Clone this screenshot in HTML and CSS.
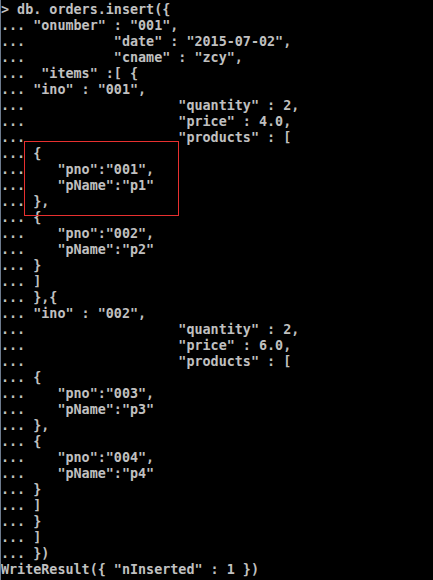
FILE: index.html
```html
<!DOCTYPE html>
<html>
<head>
<meta charset="utf-8">
<link rel="stylesheet" href="styles.css">
</head>
<body>
<div class="console">
<pre class="out">&gt; db. orders.insert({
... "onumber" : "001",
...           "date" : "2015-07-02",
...           "cname" : "zcy",
...  "items" :[ {
... "ino" : "001",
...                   "quantity" : 2,
...                   "price" : 4.0,
...                   "products" : [
... {
...    "pno":"001",
...    "pName":"p1"
... },
... {
...    "pno":"002",
...    "pName":"p2"
... }
... ]
... },{
... "ino" : "002",
...                   "quantity" : 2,
...                   "price" : 6.0,
...                   "products" : [
... {
...    "pno":"003",
...    "pName":"p3"
... },
... {
...    "pno":"004",
...    "pName":"p4"
... }
... ]
... }
... ]
... })
WriteResult({ "nInserted" : 1 })</pre>
<div class="highlight"></div>
</div>
</body>
</html>
```
FILE: styles.css
```css
html, body {
  margin: 0;
  padding: 0;
  background: #000;
}
.console {
  position: relative;
  width: 432px;
  height: 580px;
  border-left: 1px solid #6d7a8c;
  background: #000;
  overflow: hidden;
}
.out {
  margin: 0;
  padding: 2px 0 0 0;
  font-family: "DejaVu Sans Mono", monospace;
  font-weight: bold;
  font-size: 13.4px;
  line-height: 16px;
  color: #c0c0c0;
}
.highlight {
  position: absolute;
  left: 23px;
  top: 141px;
  width: 153px;
  height: 73px;
  border: 1px solid #e8302f;
}
```
